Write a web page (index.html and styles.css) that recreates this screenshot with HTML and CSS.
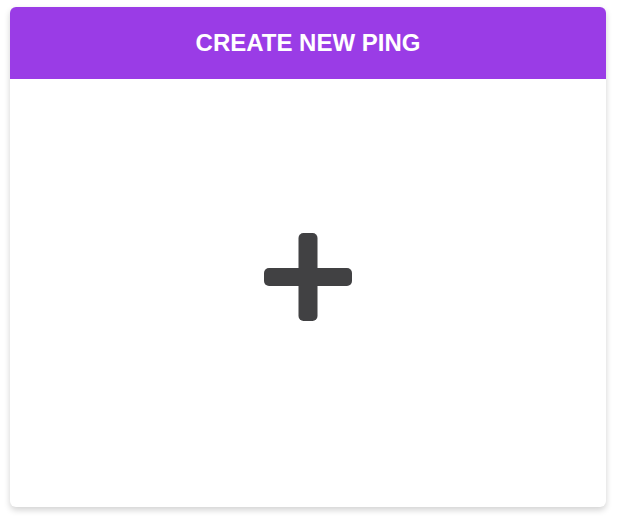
FILE: index.html
```html
<!DOCTYPE html>
<html>
<head>
<meta charset="utf-8">
<link rel="stylesheet" href="styles.css">
</head>
<body>
<div class="card">
  <div class="card-header">CREATE NEW PING</div>
  <div class="card-body">
    <svg class="plus" width="88" height="88" viewBox="0 0 88 88">
      <rect x="34.5" y="0" width="19" height="88" rx="5" fill="#414143"/>
      <rect x="0" y="35" width="88" height="18" rx="5" fill="#414143"/>
    </svg>
  </div>
</div>
</body>
</html>
```
FILE: styles.css
```css
html, body {
  margin: 0;
  padding: 0;
  background: #ffffff;
}
body {
  padding: 7px 12px 13px 10px;
  font-family: "Liberation Sans", Arial, sans-serif;
}
.card {
  width: 596px;
  height: 500px;
  border-radius: 6px;
  background: #ffffff;
  box-shadow: 0 3px 6px rgba(0, 0, 0, 0.18);
  display: flex;
  flex-direction: column;
  overflow: hidden;
}
.card-header {
  height: 72px;
  background: #9a3ce6;
  color: #ffffff;
  font-weight: bold;
  font-size: 24px;
  display: flex;
  align-items: center;
  justify-content: center;
  flex-shrink: 0;
}
.card-body {
  flex: 1;
  display: flex;
  justify-content: center;
  padding-top: 154px;
}
.plus {
  display: block;
}
```
